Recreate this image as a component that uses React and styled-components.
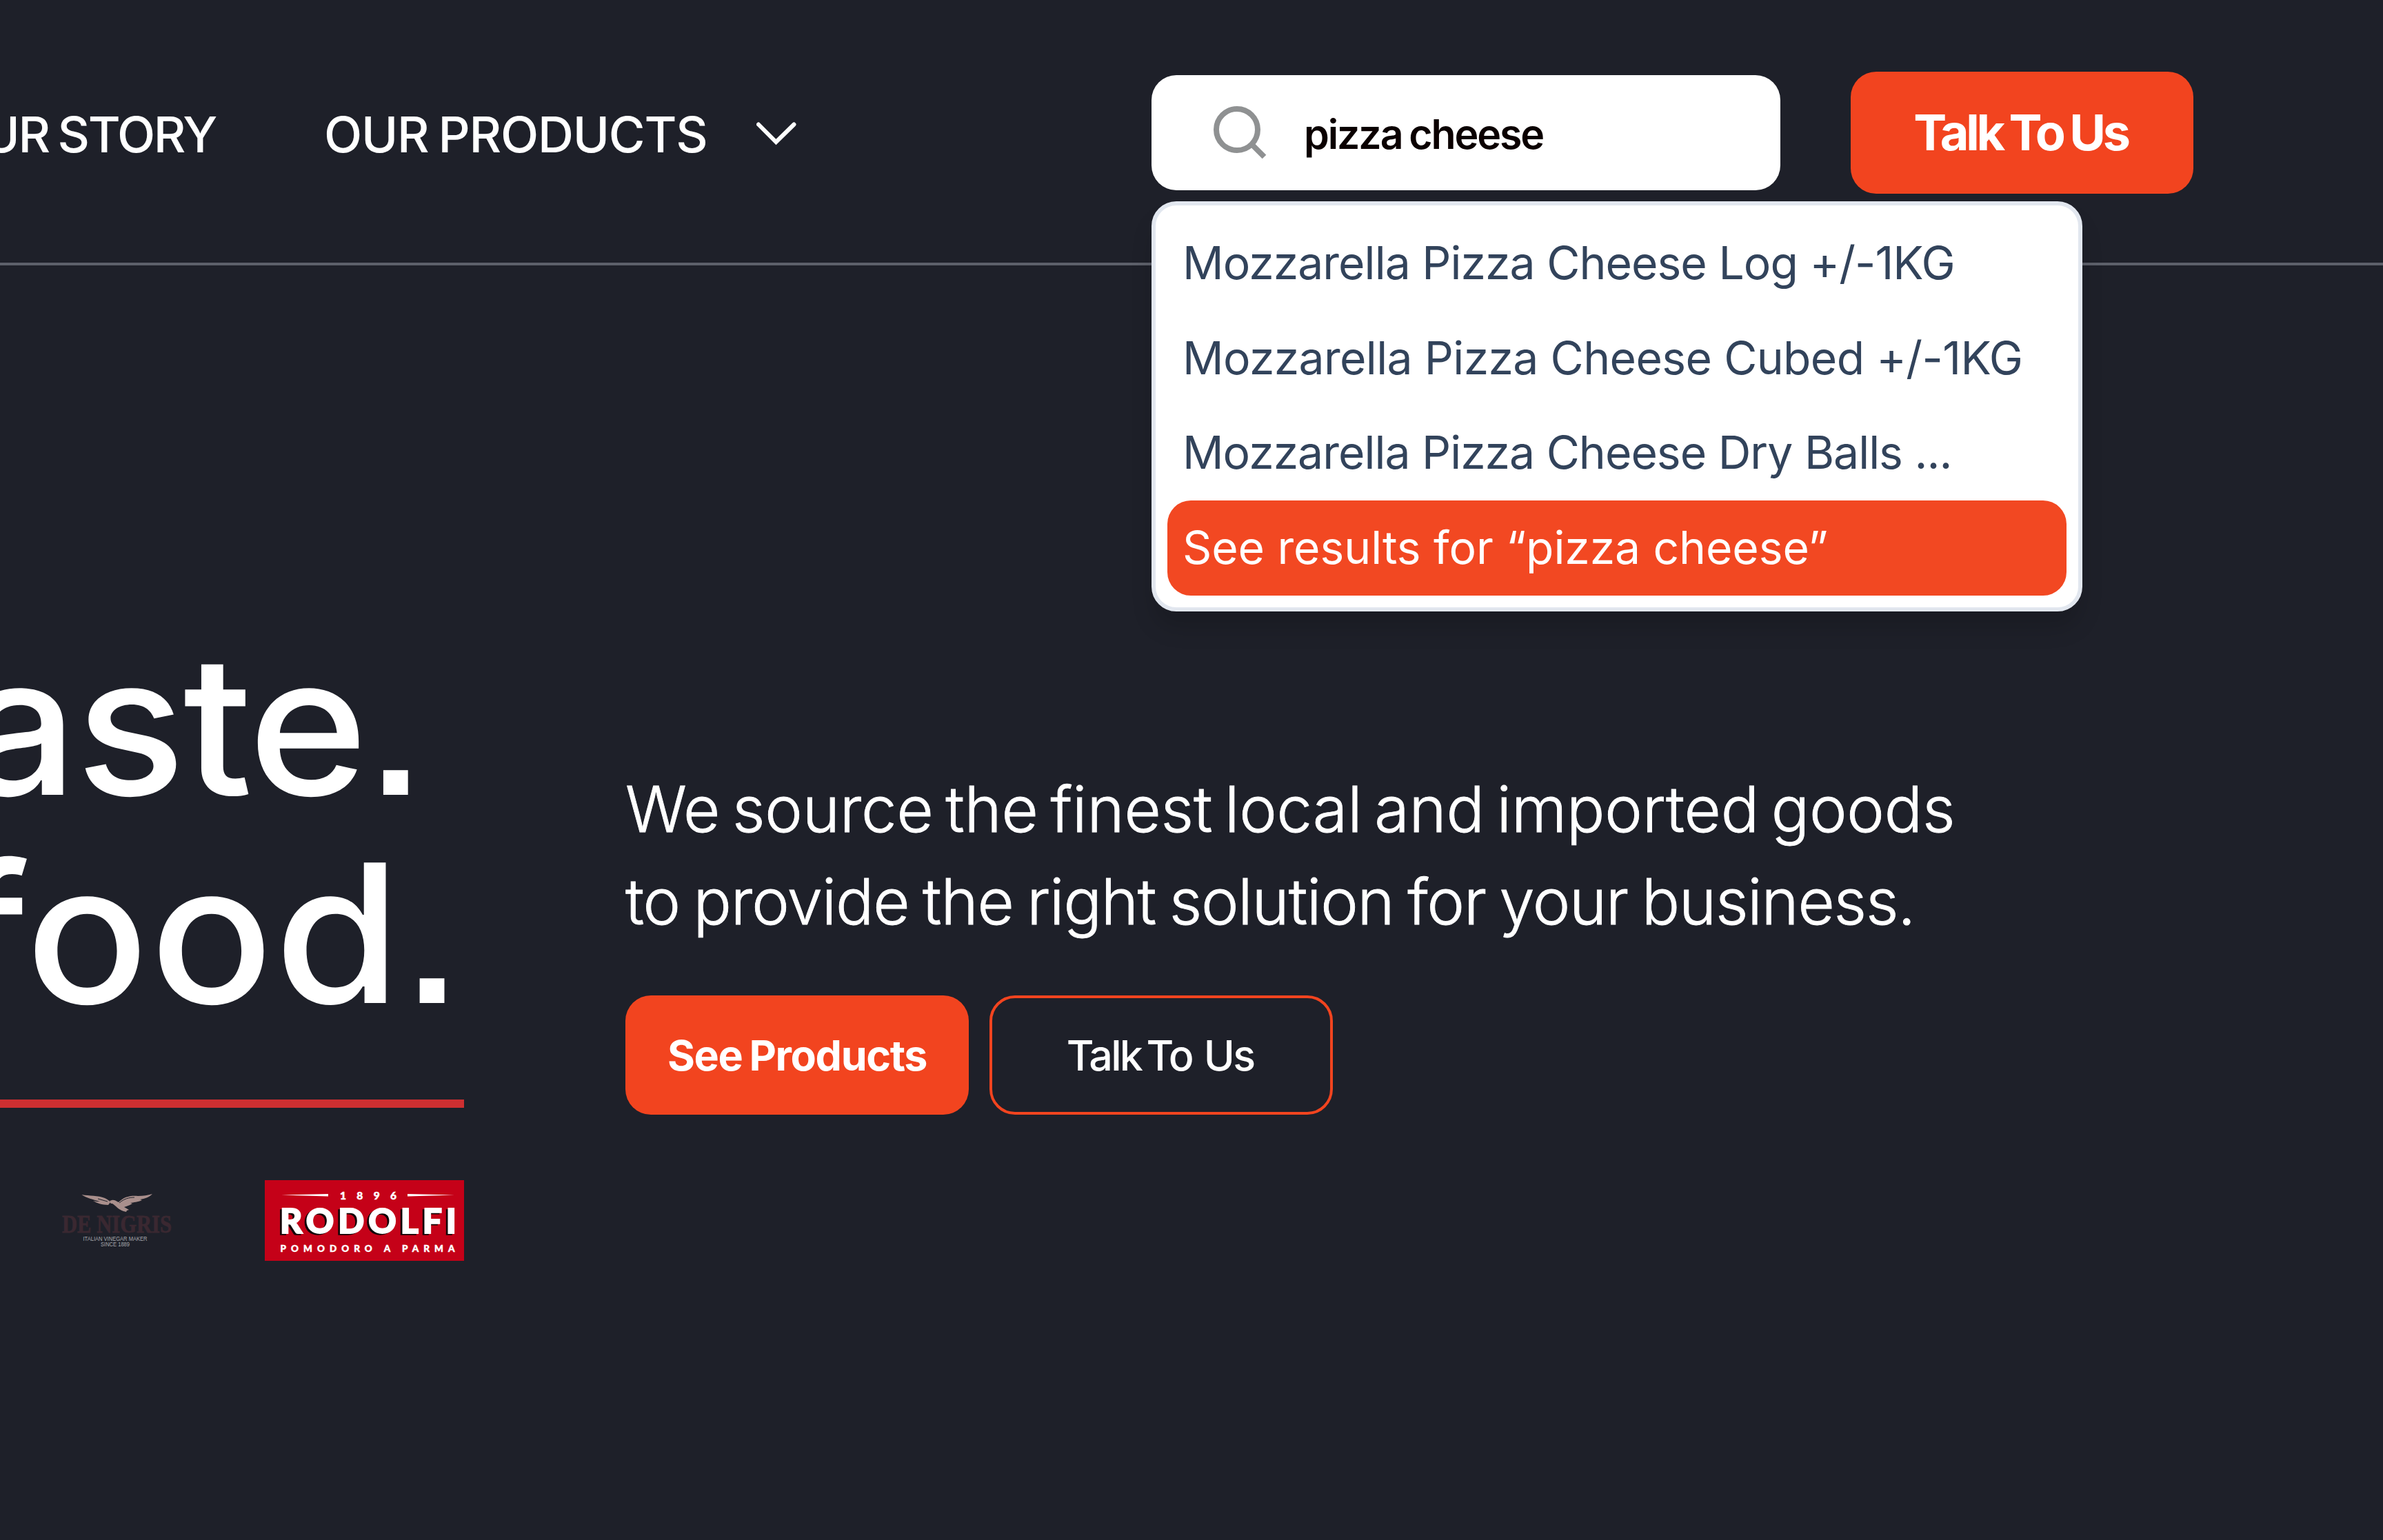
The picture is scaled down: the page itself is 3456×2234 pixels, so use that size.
import React from 'react';
import styled, { createGlobalStyle } from 'styled-components';

const GlobalStyle = createGlobalStyle`
  * {
    box-sizing: border-box;
  }

  body {
    margin: 0;
    background-color: #1e2029;
    font-family: Inter, sans-serif;
  }
`;

const Page = styled.div`
  width: 3456px;
  height: 2234px;
  overflow: hidden;
  background-color: #1e2029;
  color: #fff;
`;

const Header = styled.header`
  display: flex;
  align-items: center;
  gap: 102px;
  height: 385px;
  padding: 3px 275px 0 0;
  border-bottom: 4px solid #5d606a;
`;

const Nav = styled.nav`
  display: flex;
  align-items: center;
  flex: 1;
  gap: 157px;
  padding-top: 4px;
`;

const NavLink = styled.a`
  display: flex;
  align-items: center;
  justify-content: flex-end;
  gap: 71px;
  width: ${({ width }) => width || 'auto'};
  font-size: 72px;
  font-weight: 500;
  letter-spacing: ${({ $track }) => $track}px;
  word-spacing: -4px;
  white-space: nowrap;
  color: #fff;
`;

const Search = styled.div`
  position: relative;
  display: flex;
  align-items: center;
  gap: 54px;
  width: 912px;
  height: 167px;
  padding-left: 90px;
  border-radius: 36px;
  background-color: #fff;
`;

const Query = styled.span`
  padding-top: 4px;
  font-size: 59px;
  font-weight: 600;
  letter-spacing: -2.1px;
  word-spacing: -3px;
  color: #0b0000;
`;

const Suggestions = styled.ul`
  position: absolute;
  top: 183px;
  left: 0;
  z-index: 1;
  width: 1350px;
  margin: 0;
  padding: 16px 17px 17px;
  border: 6px solid #e2e7ef;
  border-radius: 36px;
  background-color: #fff;
  box-shadow: 0 26px 34px -4px rgba(0, 0, 0, 0.16);
  list-style: none;
`;

const Suggestion = styled.li`
  display: flex;
  align-items: center;
  height: 137.5px;
  padding: 0 0 2px 22px;
  border-radius: 34px;
  background-color: ${({ $active }) => ($active ? '#f24822' : 'transparent')};
  color: ${({ $active }) => ($active ? '#fff' : '#32435b')};
  font-size: 66px;
  font-weight: 400;
  letter-spacing: ${({ $track }) => $track}px;
  white-space: nowrap;
`;

const Button = styled.button`
  display: flex;
  align-items: center;
  justify-content: center;
  width: 498px;
  height: 173px;
  padding: 0;
  border: ${({ $outline }) => ($outline ? '4px solid #f2441f' : 'none')};
  border-radius: 37px;
  background-color: ${({ $outline }) => ($outline ? 'transparent' : '#f2441f')};
  color: #fff;
  font-family: inherit;
  font-size: 61px;
  font-weight: ${({ $outline }) => ($outline ? 500 : 700)};
  letter-spacing: ${({ $outline }) => ($outline ? '-2.8px' : '-1.4px')};
  word-spacing: ${({ $outline }) => ($outline ? '-6px' : '-3px')};
  white-space: nowrap;
`;

const HeaderButton = styled(Button)`
  width: 497px;
  height: 177px;
  padding: 0 4px 2px 0;
  font-size: 72px;
  letter-spacing: -4.3px;
  word-spacing: -3px;
`;

const ButtonWord = styled.span`
  margin: 0 3px 0 17px;
`;

const Hero = styled.main`
  display: grid;
  grid-template-columns: 673px 1fr;
  column-gap: 234px;
`;

const Intro = styled.section`
  display: flex;
  flex-direction: column;
  padding-top: 516px;
`;

const Title = styled.h1`
  display: flex;
  flex-direction: column;
  align-items: flex-end;
  margin: 0;
  font-size: 280px;
  font-weight: 500;
  line-height: 302px;
`;

const TitleLine = styled.span`
  margin-right: ${({ $inset }) => $inset}px;
  letter-spacing: ${({ $track }) => $track}px;
  white-space: nowrap;
  transform: scaleX(1.055);
  transform-origin: right;
`;

// square full stop
const Dot = styled.span`
  margin-left: 8px;
  font-family: 'Liberation Sans', sans-serif;
  font-size: 240px;
  font-weight: 700;
  line-height: 0;
  letter-spacing: 0;
`;

const Rule = styled.div`
  height: 11.5px;
  margin-top: 90px;
  background-color: #ce2f31;
`;

const Brands = styled.div`
  display: flex;
  align-items: center;
  justify-content: flex-end;
  gap: 134px;
  margin-top: 105px;
`;

const Details = styled.section`
  padding-top: 722px;
`;

const Lead = styled.p`
  margin: 0;
  font-size: 92px;
  font-weight: 300;
  line-height: 134px;
  white-space: nowrap;
  -webkit-text-stroke: 0.9px #fff;
`;

const LeadLine = styled.span`
  display: block;
  letter-spacing: ${({ $track }) => $track}px;
  word-spacing: ${({ $gap }) => $gap}px;
`;

const Actions = styled.div`
  display: flex;
  gap: 30px;
  margin-top: 69px;
`;

const suggestions = [
  { text: 'Mozzarella Pizza Cheese Log +/-1KG', track: -0.97 },
  { text: 'Mozzarella Pizza Cheese Cubed +/-1KG', track: -0.65 },
  { text: 'Mozzarella Pizza Cheese Dry Balls ...', track: -1 },
  { text: 'See results for “pizza cheese”', track: -0.1, active: true },
];

const ChevronIcon = () => (
  <svg width="58" height="34" viewBox="0 0 58 34" fill="none">
    <path d="M3 3.5 28.5 29 54.5 3.5" stroke="#fff" strokeWidth="6" strokeLinecap="round" />
  </svg>
);

const SearchIcon = () => (
  <svg width="77" height="77" viewBox="0 0 77 77" fill="none" stroke="#8f9192" strokeWidth="8">
    <circle cx="34" cy="34" r="30" />
    <path d="M55 55 73.5 73.5" />
  </svg>
);

const DeNigrisLogo = () => (
  <svg width="160" height="78" viewBox="0 0 160 78">
    <g fill="#a98f8c">
      <path d="M28.500 2C40 4 52 3 62 7c4 2 7 4 8 6l-3 4C58 17 50 14 45 11c4 1 7 1 10 1C45 9 35 7 28.500 2Z" />
      <path d="M70 11c4-3 8 0 12 2C90 5 99 3 110 4c8 0 14-1 21-3-5 5-11 7-18 8l3 1c-6 3-12 3-17 4l3 1c-5 3-9 4-12 5l7 4-3 1-1 2-4-1c-7-2-11-8-16-11-3 0-5-2-3-5Z" />
    </g>
    <path d="M83 14C90 8 97 6 105 6M52 8l14 4" stroke="#1e2029" strokeWidth="1" fill="none" />
    <text x="0" y="57" textLength="159" lengthAdjust="spacingAndGlyphs" fontFamily="Liberation Serif, serif" fontWeight="700" fontSize="35" fill="#3a2831" stroke="#3a2831" strokeWidth="0.800">DE NIGRIS</text>
    <text x="30.500" y="69" textLength="93" lengthAdjust="spacingAndGlyphs" fontFamily="Liberation Sans, sans-serif" fontSize="8.500" fill="#a6a8ad">ITALIAN VINEGAR MAKER</text>
    <text x="56" y="76.500" textLength="42" lengthAdjust="spacingAndGlyphs" fontFamily="Liberation Sans, sans-serif" fontSize="8.500" fill="#a6a8ad">SINCE 1889</text>
  </svg>
);

const RodolfiLogo = () => (
  <svg width="289" height="117" viewBox="0 0 289 117" fontFamily="Lato, sans-serif" fontWeight="900" fill="#fff">
    <rect width="289" height="117" fill="#c50118" />
    <path d="M24 21.500 92 20v3.500ZM275 21.500 207 20v3.500Z" />
    <text x="109" y="27.500" fontSize="15.500" textLength="82" stroke="#fff" strokeWidth="0.500">1896</text>
    <text x="19" y="79" fontSize="50" textLength="256" fill="#120608" stroke="#120608" strokeWidth="1.500">RODOLFI</text>
    <text x="22" y="77" fontSize="50" textLength="256" stroke="#fff" strokeWidth="2">RODOLFI</text>
    <text x="22.500" y="104" fontSize="13.500" textLength="253" stroke="#fff" strokeWidth="0.500">POMODORO A PARMA</text>
  </svg>
);

const App = () => {
  return (
    <Page>
      <GlobalStyle />
      <Header>
        <Nav>
          <NavLink width="313px" $track={-2.4}>OUR STORY</NavLink>
          <NavLink $track={-1.2}>
            OUR PRODUCTS
            <ChevronIcon />
          </NavLink>
        </Nav>
        <Search>
          <SearchIcon />
          <Query>pizza cheese</Query>
          <Suggestions>
            {suggestions.map(item => (
              <Suggestion key={item.text} $track={item.track} $active={item.active}>
                {item.text}
              </Suggestion>
            ))}
          </Suggestions>
        </Search>
        <HeaderButton>Talk To Us</HeaderButton>
      </Header>
      <Hero>
        <Intro>
          <Title>
            <TitleLine $inset={64} $track={-3}>taste<Dot>.</Dot></TitleLine>
            <TitleLine $inset={11} $track={2}>food<Dot>.</Dot></TitleLine>
          </Title>
          <Rule />
          <Brands>
            <DeNigrisLogo />
            <RodolfiLogo />
          </Brands>
        </Intro>
        <Details>
          <Lead>
            <LeadLine $track={-0.15} $gap={-8}>We source the finest local and imported goods</LeadLine>
            <LeadLine $track={-1.17} $gap={-5}>to provide the right solution for your business.</LeadLine>
          </Lead>
          <Actions>
            <Button>See Products</Button>
            <Button $outline>
              Talk To <ButtonWord>Us</ButtonWord>
            </Button>
          </Actions>
        </Details>
      </Hero>
    </Page>
  );
};

export default App;
